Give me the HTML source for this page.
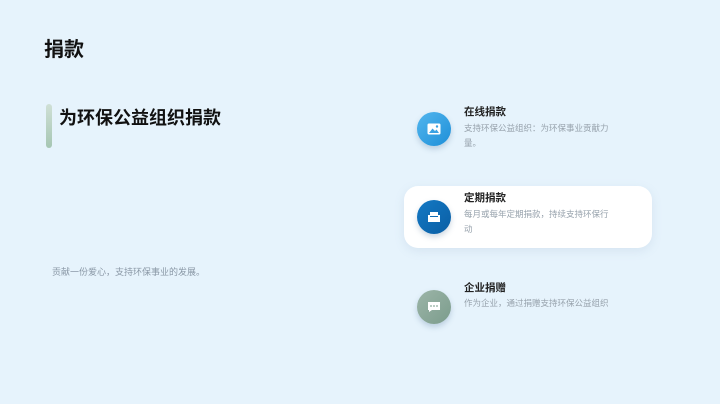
<!DOCTYPE html>
<html><head><meta charset="utf-8"><style>
*{margin:0;padding:0;box-sizing:border-box}
body{width:720px;height:404px;background:#e6f3fc;font-family:"Liberation Sans","Noto Sans CJK SC",sans-serif;position:relative;overflow:hidden}
.a{position:absolute}
h1{position:absolute;left:44px;top:33px;font-size:20px;font-weight:bold;color:#111}
.bar{left:46px;top:104px;width:6px;height:44px;border-radius:3px;background:linear-gradient(#cfe0d6,#a6c6b3)}
.sub{left:59px;top:104px;font-size:18px;font-weight:bold;color:#111}
.desc{left:52px;top:265px;font-size:9px;color:#8a98a6}
.card{left:404px;top:186px;width:248px;height:62px;background:#fff;border-radius:14px;box-shadow:0 3px 10px rgba(120,150,180,.15)}
.ic{width:34px;height:34px;border-radius:50%;box-shadow:0 3px 6px rgba(60,100,140,.25);display:flex;align-items:center;justify-content:center}
.t{font-size:10.5px;font-weight:bold;color:#222}
.d{font-size:8.5px;color:#97a2ac;line-height:15px;width:154px}
</style></head><body>
<h1>捐款</h1>
<div class="a bar"></div>
<div class="a sub">为环保公益组织捐款</div>
<div class="a desc">贡献一份爱心，支持环保事业的发展。</div>
<div class="a card"></div>
<div class="a ic" style="left:417px;top:112px;background:linear-gradient(135deg,#52b6ee,#1e8fd8)"><svg width="14" height="12"><rect x="0.5" y="0.5" width="13" height="11" rx="1.5" fill="#fff"/><path d="M2 10 L5.5 5.5 L8 8 L9.5 6.5 L12 10Z" fill="#3aa2e3"/><circle cx="10" cy="3.5" r="1.2" fill="#3aa2e3"/></svg></div>
<div class="a t" style="left:464px;top:104px">在线捐款</div>
<div class="a d" style="left:464px;top:121px">支持环保公益组织：为环保事业贡献力量。</div>
<div class="a ic" style="left:417px;top:200px;background:linear-gradient(135deg,#1479c4,#0a5ea4)"><svg width="14" height="12"><path d="M1 4h2v2h8V4h2v7H1z M3 1h8v4H3z" fill="#fff"/></svg></div>
<div class="a t" style="left:464px;top:190px">定期捐款</div>
<div class="a d" style="left:464px;top:207px;width:145px">每月或每年定期捐款，持续支持环保行动</div>
<div class="a ic" style="left:417px;top:290px;background:linear-gradient(135deg,#9cb5a8,#7b9c8c)"><svg width="14" height="12"><path d="M1 1h12v8H5l-3 2V9H1z" fill="#fff"/><circle cx="4" cy="5" r=".9" fill="#8aa99a"/><circle cx="7" cy="5" r=".9" fill="#8aa99a"/><circle cx="10" cy="5" r=".9" fill="#8aa99a"/></svg></div>
<div class="a t" style="left:464px;top:280px">企业捐赠</div>
<div class="a d" style="left:464px;top:296px;width:180px">作为企业，通过捐赠支持环保公益组织</div>
</body></html>
